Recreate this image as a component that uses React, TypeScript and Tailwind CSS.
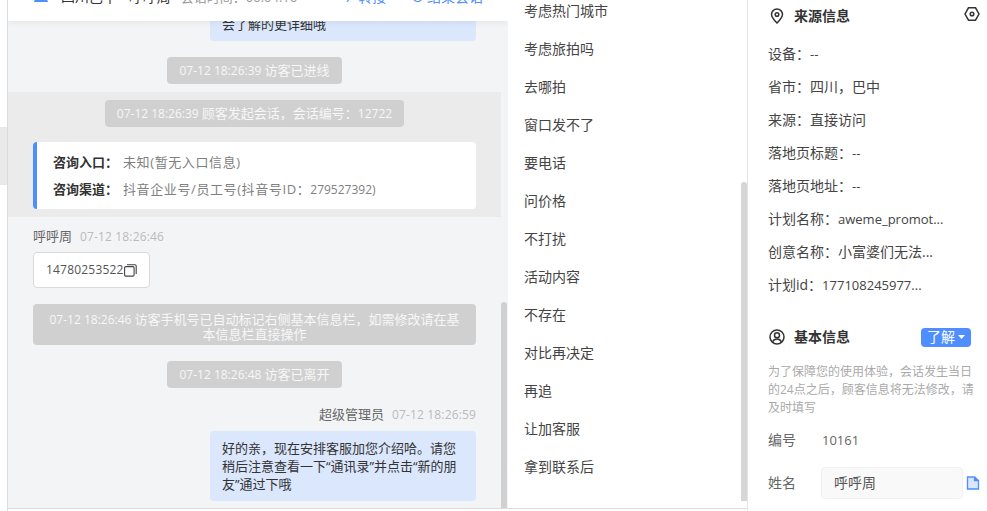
import type { ReactNode } from "react";

const font = "[font-family:'Open_Sans','Noto_Sans_CJK_SC',sans-serif]";

const sourceRows: [string, string][] = [
  ["设备：", "--"],
  ["省市：四川，巴中", ""],
  ["来源：直接访问", ""],
  ["落地页标题：", "--"],
  ["落地页地址：", "--"],
  ["计划名称：", "aweme_promot..."],
  ["创意名称：小富婆们无法...", ""],
  ["计划id：", "177108245977..."],
];

const phrases = [
  "考虑热门城市",
  "考虑旅拍吗",
  "去哪拍",
  "窗口发不了",
  "要电话",
  "问价格",
  "不打扰",
  "活动内容",
  "不存在",
  "对比再决定",
  "再追",
  "让加客服",
  "拿到联系后",
];

const Notice = ({ time, children }: { time: string; children: ReactNode }) => (
  <div className="flex h-[27px] items-center rounded-sm bg-[#d0d0d0] px-3 text-[13px] text-[#f7f7f7]">
    <span className="text-xs">{time}&nbsp;</span>
    {children}
  </div>
);

const App = () => {
  return (
    <div className={`flex h-[511px] w-[987px] overflow-hidden bg-white ${font}`}>
      {/* left sliver */}
      <div className="flex w-[8px] shrink-0 flex-col border-r border-[#dcdcdc] pt-[127px]">
        <div className="h-[58px] bg-[#e9e9e9]" />
      </div>

      {/* chat */}
      <div className="flex h-[511px] w-[500px] shrink-0 flex-col overflow-hidden">
        <div className="z-10 flex h-[21px] shrink-0 items-start justify-between bg-white px-[25px] shadow-[0_2px_6px_rgba(0,0,0,0.06)]">
          <div className="-mt-[13px] flex h-[20px] items-center text-sm text-[#333]">
            <svg width="16" height="16" viewBox="0 0 16 16" className="mr-3 text-[#4f8eff]">
              <circle cx="8" cy="4" r="3.5" fill="currentColor" />
              <path d="M1 13c0-2.5 3-3.5 7-3.5s7 1 7 3.5H1z" fill="currentColor" />
            </svg>
            <span>四川巴中 - 呼呼周</span>
            <span className="ml-[10px] text-[13px] text-[#999]">会话时间：00:04:16</span>
          </div>
          <div className="-mt-[13px] flex h-[20px] items-center gap-[26px] text-sm text-[#4f8eff]">
            <span>↗转接</span>
            <span>⏻ 结束会话</span>
          </div>
        </div>

        <div className="flex min-h-0 flex-1 bg-[#f3f4f6]">
          <div className="w-[493px] shrink-0">
            <div className="px-[25px]">
              <div className="ml-auto h-[20px] w-[266px] rounded-b-[4px] bg-[#dbe7fd] pl-3 text-[13px] leading-[6px] text-[#333]">
                会了解的更详细哦
              </div>
            </div>

            <div className="mt-4 flex justify-center">
              <Notice time="07-12 18:26:39">访客已进线</Notice>
            </div>

            <div className="mt-2 h-[125px] bg-[#ebebeb] px-[25px] pt-2">
              <div className="flex justify-center">
                <Notice time="07-12 18:26:39">
                  顾客发起会话，会话编号：<span className="text-xs">12722</span>
                </Notice>
              </div>
              <div className="mt-[15px] flex h-[67px] flex-col justify-center gap-[7px] rounded-sm border-l-4 border-[#4f8eff] bg-white pl-4 text-[13px] leading-[20px] text-[#808080]">
                <div>
                  <span className="mr-[5px] font-bold text-[#333]">咨询入口：</span>
                  <span className="tracking-[0.6px]">未知(暂无入口信息)</span>
                </div>
                <div>
                  <span className="mr-[5px] font-bold text-[#333]">咨询渠道：</span>
                  <span className="tracking-[0.6px]">抖音企业号/员工号(抖音号ID：</span>
                  <span className="text-xs">279527392)</span>
                </div>
              </div>
            </div>

            <div className="px-[25px]">
              <div className="mt-[10px] flex h-[20px] items-center gap-2">
                <span className="text-[13px] text-[#666]">呼呼周</span>
                <span className="text-xs tracking-[0.15px] text-[#bbb]">07-12 18:26:46</span>
              </div>
              <div className="mt-[5px] flex h-[36px] w-[117px] items-center rounded border border-[#d9d9d9] bg-white pl-[12px] text-xs tracking-[0.2px] text-[#555]">
                14780253522
                <svg width="13" height="13" viewBox="0 0 13 13" fill="none" stroke="#444" strokeWidth="1.1">
                  <rect x="0.6" y="2.6" width="9.5" height="9.5" rx="1.2" />
                  <path d="M3 0.8h8a1.2 1.2 0 0 1 1.2 1.2v8" />
                </svg>
              </div>

              <div className="mt-4 rounded-sm bg-[#d0d0d0] px-4 pb-1 pt-2 text-center text-[13px] leading-[14px] text-[#f7f7f7]">
                <span className="text-xs leading-[14px]">07-12 18:26:46&nbsp;</span>
                访客手机号已自动标记右侧基本信息栏，如需修改请在基本信息栏直接操作
              </div>

              <div className="mt-4 flex justify-center">
                <Notice time="07-12 18:26:48">访客已离开</Notice>
              </div>

              <div className="mt-[17px] flex h-[20px] items-center justify-end gap-2">
                <span className="text-[13px] text-[#666]">超级管理员</span>
                <span className="text-xs tracking-[0.15px] text-[#bbb]">07-12 18:26:59</span>
              </div>
              <div className="ml-auto mt-[6px] h-[70px] w-[266px] rounded bg-[#dbe7fd] px-3 py-2 text-[13px] leading-[18px] text-[#333]">
                好的亲，现在安排客服加您介绍哈。请您稍后注意查看一下“通讯录”并点击“新的朋友”通过下哦
              </div>
            </div>
          </div>
          {/* chat scrollbar */}
          <div className="flex w-[6px] shrink-0 flex-col pt-[281px]">
            <div className="flex-1 rounded-t bg-[#d0d0d0]" />
          </div>
        </div>

        <div className="h-[3px] shrink-0 border-t border-[#dcdcdc] bg-white" />
      </div>

      {/* quick phrases */}
      <div className="flex h-[511px] w-[240px] shrink-0 flex-col border-r border-[#e4e4e4]">
        <div className="flex min-h-0 flex-1">
          <div className="flex flex-1 flex-col gap-[18px] pl-[16px] pt-[1px]">
            {phrases.map((p) => (
              <div key={p} className="h-[20px] text-sm leading-[20px] text-[#444]">
                {p}
              </div>
            ))}
          </div>
          <div className="flex w-[6px] shrink-0 flex-col pb-[7px] pt-[182px]">
            <div className="flex-1 rounded-t bg-[#d6d6d6]" />
          </div>
        </div>
        <div className="h-[3px] shrink-0 border-t border-[#dcdcdc]" />
      </div>

      {/* right info */}
      <div className="w-[239px] shrink-0 pl-5 pr-[7px] pt-[6px]">
        <div className="flex h-[20px] items-center">
          <svg width="14" height="16" viewBox="0 0 14 16" fill="none" stroke="#333" strokeWidth="1.5" className="ml-[2px] mr-[10px]">
            <path d="M7 15C4 12 1.5 9.5 1.5 6.5a5.5 5.5 0 0 1 11 0C12.5 9.5 10 12 7 15z" />
            <circle cx="7" cy="6.5" r="1.8" />
          </svg>
          <span className="flex-1 text-sm font-bold text-[#333]">来源信息</span>
          <svg width="16" height="16" viewBox="0 0 16 16" fill="none" stroke="#333" strokeWidth="1.5" className="-mt-1">
            <path d="M4.5 1.800h7L15 8l-3.500 6.200h-7L1 8z" />
            <circle cx="8" cy="8" r="1.8" />
          </svg>
        </div>

        <div className="mt-[18px] flex flex-col gap-[13px] text-sm leading-[20px] text-[#444]">
          {sourceRows.map(([label, value]) => (
            <div key={label} className="whitespace-nowrap">
              {label}
              <span className="text-[13px]">{value}</span>
            </div>
          ))}
        </div>

        <div className="mt-[32px] flex h-[20px] items-center">
          <svg width="16" height="16" viewBox="0 0 16 16" fill="none" stroke="#333" strokeWidth="1.5" className="ml-[1px] mr-[9px]">
            <circle cx="8" cy="8" r="7" />
            <circle cx="8" cy="6.2" r="2.5" />
            <path d="M3.5 13c.8-2 2.500-3 4.500-3s3.700 1 4.500 3" />
          </svg>
          <span className="flex-1 text-sm font-bold text-[#333]">基本信息</span>
          <div className="mr-[9px] flex h-[19px] w-[50px] items-center justify-center gap-[3px] rounded-sm bg-[#4f8eff] text-sm text-white">
            了解
            <svg width="7" height="4" viewBox="0 0 7 4"><path d="M0 0h7L3.500 4z" fill="#fff" /></svg>
          </div>
        </div>

        <p className="mt-[16px] text-xs leading-[18px] text-[#aaa]">
          为了保障您的使用体验，会话发生当日的24点之后，顾客信息将无法修改，请及时填写
        </p>

        <div className="mt-[13px] flex h-[20px] items-center text-sm leading-[20px] text-[#666]">
          <span className="w-[54px]">编号</span>
          <span className="text-[13px]">10161</span>
        </div>

        <div className="mt-[17px] flex items-center text-sm text-[#666]">
          <span className="w-[53px]">姓名</span>
          <div className="flex h-[32px] w-[142px] items-center rounded-sm border border-[#f1f1f1] bg-[#f9f9f9] pl-3 text-[#555]">
            呼呼周
          </div>
          <svg width="14" height="14" viewBox="0 0 14 14" fill="#dbe7fd" stroke="#4f8eff" strokeWidth="1.3" className="ml-[3px]">
            <path d="M1.500 1h7l4 3.500V13h-11z" />
            <path d="M8.500 1v3.500h4" fill="#4f8eff" />
          </svg>
        </div>
      </div>
    </div>
  );
};

export default App;
